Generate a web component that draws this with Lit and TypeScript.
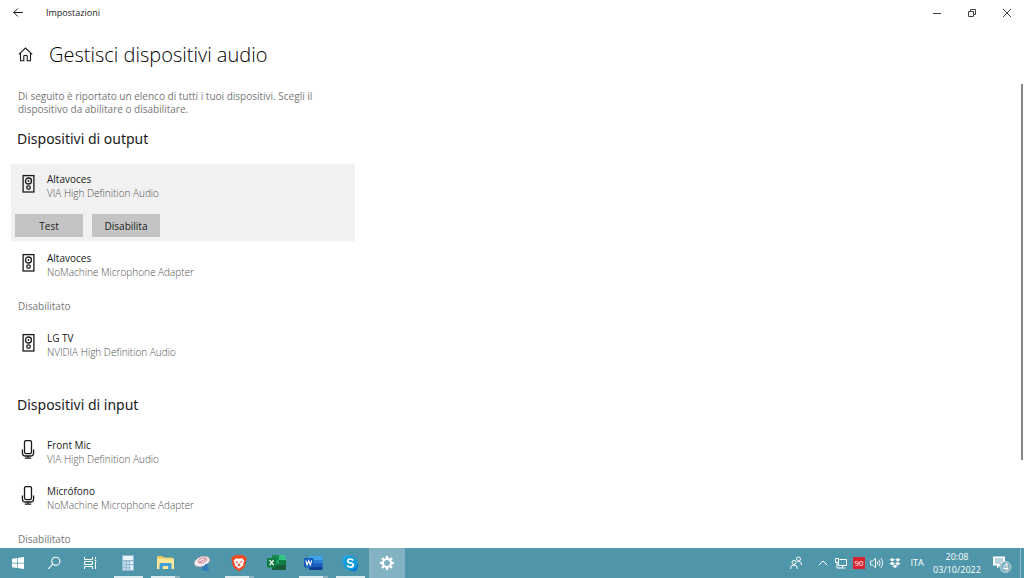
import { LitElement, html, css, svg, nothing } from "lit";
import { customElement, property } from "lit/decorators.js";
import { classMap } from "lit/directives/class-map.js";

const speaker = html`<svg class="glyph" width="20" height="20" viewBox="0 0 20 20" fill="none" stroke="#1a1a1a" aria-hidden="true">
  <rect x="4.1" y="1.6" width="10.8" height="16.4" stroke-width="1.3" />
  <circle cx="9.5" cy="7" r="3" stroke-width="1.3" />
  <circle cx="9.5" cy="7" r="0.9" fill="#1a1a1a" stroke="none" />
  <circle cx="9.5" cy="13.6" r="1.8" stroke-width="1.3" />
</svg>`;

const microphone = html`<svg class="glyph" width="20" height="20" viewBox="0 0 20 20" fill="none" stroke="#1a1a1a" stroke-width="1.3" aria-hidden="true">
  <rect x="5.5" y=".6" width="7" height="13" rx="1.6" />
  <path d="M3.400 9.500v3.200q0 3.300 3.200 3.300h4.800q3.200 0 3.200-3.300V9.500M9 16v2.300M5.800 18.200h6.400" />
</svg>`;

@customElement("device-item")
class DeviceItem extends LitElement {
  @property() name = "";
  @property() detail = "";
  @property() kind = "speaker";
  @property({ type: Boolean }) selected = false;

  static styles = css`
    :host { display: block; }
    .item { max-width: 344px; }
    .selected { background: #f1f1f1; margin-bottom: 2px; padding-bottom: 4px; }
    .row { display: flex; gap: 8px; padding: 8px 8px 10px; line-height: 14px; }
    .glyph { display: block; flex: none; margin-top: 2px; }
    .name { color: #1a1a1a; }
    .detail { color: #505050; font-weight: 300; }
    .actions { display: flex; gap: 9px; padding: 4px 4px 0; }
    .action { width: 68px; height: 23px; padding: 0; border: 0; background: #c4c4c4; color: #1a1a1a; font: inherit; }
  `;

  render() {
    return html`<div class=${classMap({ item: true, selected: this.selected })}>
      <div class="row">
        ${this.kind === "mic" ? microphone : speaker}
        <div>
          <div class="name">${this.name}</div>
          <div class="detail">${this.detail}</div>
        </div>
      </div>
      ${this.selected
        ? html`<div class="actions">
            <button class="action" type="button">Test</button>
            <button class="action" type="button">Disabilita</button>
          </div>`
        : nothing}
    </div>`;
  }
}

const start = svg`<g fill="#fff"><path d="M2 3.800l5-.7v4.600H2zM7.700 3l6.300-.9v5.600H7.700zM2 8.400h5V13l-5-.7zM7.700 8.400H14V14l-6.300-.9z"/></g>`;
const search = svg`<g fill="none" stroke="#fff" stroke-width="1.100"><circle cx="9.800" cy="6.300" r="4.100"/><path d="M6.900 9.200 2.300 13.800"/></g>`;
const taskView = svg`<g fill="none" stroke="#fff"><path d="M2.500 2v2.500h8V2M2.500 14v-2.500h8V14M2.500 6.500h8v3h-8zM13.500 2v2M13.500 7v7"/><path d="M12.700 5.500h1.600" stroke-width="1.600"/></g>`;
const calculator = svg`<rect x="2" y="0" width="12" height="16" fill="#8fb9d3"/><rect x="3" y="1" width="10" height="4" fill="#e8f5fb"/><g fill="#c5dceb"><path d="M3 6.500h2.600V9H3zM6.700 6.500h2.600V9H6.700zM3 10h2.600v2.200H3zM6.700 10h2.600v2.200H6.700zM3 13.200h2.600V15H3zM6.700 13.200h2.600V15H6.700z"/></g><path d="M10.300 6.500H13V9h-2.700z" fill="#f5fafc"/><path d="M10.300 10H13v5h-2.700z" fill="#e3f2fa"/>`;
const folder = svg`<path d="M0 1h5.500L7 2.500h9V14H0z" fill="#e9c85d"/><path d="M0 3.500h17V14H0z" fill="#fbe69a"/><path d="M2.500 14V9.200q0-1.200 1.200-1.200h9.600q1.200 0 1.200 1.200V14h-3.300v-3H5.800v3z" fill="#3f9fd5"/>`;
const snip = svg`<ellipse cx="8" cy="6.500" rx="8" ry="4.800" transform="rotate(-20 8 6.500)" fill="#f1edf0" stroke="#c9a9b0" stroke-width=".7"/><ellipse cx="8.500" cy="5.500" rx="4.500" ry="2.300" transform="rotate(-20 8.500 5.500)" fill="none" stroke="#ca7182" stroke-width=".8"/><path d="M5 7.500 12 4" stroke="#c45d6d" stroke-width=".8"/><g fill="none" stroke="#2878c0" stroke-width="1.300"><circle cx="9.600" cy="13.200" r="1.400"/><circle cx="12.800" cy="14" r="1.300"/><path d="M10.500 12 14.500 9M12.500 12.800l-1-3.800"/></g>`;
const brave = svg`<path d="M4 0h8l1.500 1.600 1.500.2.700 2.200-2 8L8 16.500 2.300 12l-2-8L1 1.800l1.500-.2z" fill="#ee4b24"/><path d="M5 3.200 8 3.800l3-.6 2.500 2.500-1.500 3.500.3 1.200L10 12l-2 1.800L6 12l-2.300-1.600.3-1.200-1.500-3.500z" fill="#fff"/><path d="M4 6l3 .8-.8 1.400zM12 6l-3 .8.8 1.400zM8 7.500l.7 2 1.300.8-2 1-2-1 1.300-.8z" fill="#ee4b24"/>`;
const excel = svg`<rect x="4" y="0" width="14" height="15" rx="1" fill="#21a366"/><path d="M4 0h7v5H4z" fill="#178a50"/><path d="M11 0h6q1 0 1 1v4h-7z" fill="#33c481"/><path d="M4 9.500h14V14q0 1-1 1H5q-1 0-1-1z" fill="#185c37"/><path d="M11 5h7v5h-7z" fill="#107c41"/><rect x="-1" y="3" width="9.500" height="9.500" rx="1" fill="#107c41"/><path d="m1.600 5.200 4 5M5.600 5.200l-4 5" stroke="#fff" stroke-width="1.300"/>`;
const word = svg`<rect x="4" y="1" width="13.500" height="14" rx="1" fill="#2b7cd3"/><path d="M4 2q0-1 1-1h11.500q1 0 1 1v3H4z" fill="#41a5ee"/><path d="M4 8.500h13.500V12H4z" fill="#185abd"/><path d="M4 12h13.500v2q0 1-1 1H5q-1 0-1-1z" fill="#103f91"/><rect x="-1" y="3" width="9.500" height="9.500" rx="1" fill="#185abd"/><path d="m.8 5.500 1.300 4.500 1.600-4.300L5.300 10l1.400-4.500" fill="none" stroke="#fff" stroke-width="1.100"/>`;
const skype = svg`<circle cx="6" cy="5.500" r="5.500" fill="#28a8ea"/><circle cx="11" cy="11" r="5.200" fill="#0078d4"/><circle cx="8.300" cy="8" r="7" fill="#109bdd"/><path d="M11.200 5.500Q10.400 4 8.300 4 5.700 4 5.700 5.900q0 1.500 2.700 2 2.900.6 2.900 2.200 0 2-2.900 2-2.500 0-3.200-1.800" fill="none" stroke="#fff" stroke-width="1.700"/>`;
const gear = svg`<circle cx="8" cy="8" r="4" fill="none" stroke="#fff" stroke-width="2"/><path d="M8 1v3M8 12v3M1 8h3M12 8h3M3.050 3.050l2.100 2.100M10.850 10.850l2.100 2.100M12.950 3.050l-2.100 2.100M5.150 10.850l-2.100 2.100" stroke="#fff" stroke-width="2.400"/>`;

const shell = [
  { label: "Start", art: start },
  { label: "Cerca", art: search },
  { label: "Visualizzazione attività", art: taskView },
];

const apps = [
  { label: "Calcolatrice", art: calculator, state: "open" },
  { label: "Esplora file", art: folder, state: "stacked" },
  { label: "Strumento di cattura", art: snip, state: "" },
  { label: "Brave", art: brave, state: "stacked" },
  { label: "Excel", art: excel, state: "" },
  { label: "Word", art: word, state: "stacked" },
  { label: "Skype", art: skype, state: "open" },
  { label: "Impostazioni", art: gear, state: "active" },
];

@customElement("task-bar")
class TaskBar extends LitElement {
  static styles = css`
    :host { display: flex; height: 30px; background: #5096aa; color: #fff; }
    button { padding: 0; border: 0; background: none; color: inherit; font: inherit; display: flex; align-items: center; justify-content: center; }
    svg { display: block; overflow: visible; }
    .group { display: flex; }
    .apps { gap: 1px; margin-left: 2px; flex: 1; }
    .task { width: 36px; position: relative; }
    .open::after, .stacked::after { content: ""; position: absolute; bottom: 0; left: 4px; right: 3px; height: 2px; background: #dcebef; }
    .stacked::after { background: linear-gradient(to right, #dcebef 24px, #8fb4c1 24px); }
    .active { background: #83b3c2; }
    .tray { display: flex; align-items: center; }
    .tray button { width: 18px; height: 30px; }
    .tray .people { margin-right: 9px; }
    .badge { background: #d8232f; width: 12px; height: 12px; line-height: 12px; font-size: 8px; text-align: center; }
    .tray .lang { width: 26px; font-size: 9px; }
    .tray .clock { width: 54px; flex-direction: column; font-size: 9px; line-height: 13px; }
    .tray .notes { width: 36px; }
    .count { font: 10px "Open Sans", sans-serif; }
    .tray .desktop { width: 4px; border-left: 1px solid #8dbac7; }
  `;

  render() {
    return html`
      <div class="group">
        ${shell.map((b) => html`<button class="task" type="button" aria-label=${b.label}>
          <svg width="16" height="16" viewBox="0 0 16 16">${b.art}</svg></button>`)}
      </div>
      <div class="group apps">
        ${apps.map((b) => html`<button
          class=${classMap({ task: true, open: b.state === "open", stacked: b.state === "stacked", active: b.state === "active" })}
          type="button" aria-label=${b.label}>
          <svg width="16" height="16" viewBox="0 0 16 16">${b.art}</svg></button>`)}
      </div>
      <div class="tray">
        <button class="people" type="button" aria-label="Contatti">
          <svg width="14" height="14" viewBox="0 0 14 14" fill="none" stroke="#fff"><circle cx="5" cy="6.500" r="2"/><path d="M1.500 13q0-4 3.500-4t3.500 4"/><circle cx="9.500" cy="3" r="2"/><path d="M8.500 5.700q4-1 4 3.300"/></svg>
        </button>
        <button type="button" aria-label="Mostra icone nascoste">
          <svg width="10" height="6" viewBox="0 0 10 6" fill="none" stroke="#fff"><path d="M.8 5.200 5 1l4.200 4.200"/></svg>
        </button>
        <button type="button" aria-label="Rete">
          <svg width="12" height="12" viewBox="0 0 12 12" fill="none" stroke="#fff"><path d="M4.500 2.500h7v6h-8V6M7.500 8.500v2M4.500 11h6M.5 1.500h3v4h-3zM2 5.500V11h3"/></svg>
        </button>
        <button type="button" aria-label="Temperatura"><span class="badge">90</span></button>
        <button type="button" aria-label="Volume">
          <svg width="14" height="12" viewBox="0 0 14 12" fill="none" stroke="#fff" stroke-width=".9"><path d="M.6 4h2L5.500 1.300v9.400L2.600 8h-2zM7.200 4.300q1.200 1.700 0 3.400M9 2.800q2.300 3.200 0 6.400M10.900 1.300q3.300 4.700 0 9.400"/></svg>
        </button>
        <button type="button" aria-label="Dropbox">
          <svg width="12" height="10" viewBox="0 0 12 10" fill="#fff"><path d="m3.200 0 2.700 1.800-2.700 1.800L.5 1.800zM8.800 0l2.700 1.800-2.700 1.800-2.700-1.800zM3.200 3.800l2.700 1.800-2.700 1.800L.5 5.600zM8.800 3.800l2.700 1.800-2.700 1.800-2.700-1.800zM6 6.500l2.500 1.700L6 10 3.500 8.200z"/></svg>
        </button>
        <button class="lang" type="button">ITA</button>
        <button class="clock" type="button"><span>20:08</span><span>03/10/2022</span></button>
        <button class="notes" type="button" aria-label="Notifiche">
          <svg width="18" height="18" viewBox="0 0 18 18"><path d="M0 2.500h12v9H7l-3 3v-3H0z" fill="#fff"/><path d="M2 5h8M2 7h8M2 9h6" stroke="#5096aa" stroke-width=".8"/><circle cx="12.500" cy="13" r="5.500" fill="#84b2c0" stroke="#c4dce3" stroke-width=".8"/><text class="count" x="12.500" y="17" text-anchor="middle" fill="#fff">4</text></svg>
        </button>
        <button class="desktop" type="button" aria-label="Mostra desktop"></button>
      </div>
    `;
  }
}

@customElement("app-root")
class AppRoot extends LitElement {
  static styles = css`
    :host { display: flex; flex-direction: column; height: 100vh; overflow: hidden; background: #fff; color: #1a1a1a; font: 10px/14px "Open Sans", "Noto Sans", sans-serif; }
    button { padding: 0; border: 0; background: none; color: inherit; display: flex; align-items: center; justify-content: center; }
    svg { display: block; }
    .titlebar { display: flex; height: 25px; align-items: center; font-size: 9px; }
    .back { width: 36px; height: 25px; }
    .title { flex: 1; padding-left: 10px; }
    .win { width: 35px; height: 25px; }
    .header { display: flex; align-items: center; gap: 16px; height: 59px; padding-left: 18px; }
    h1 { margin: 0; font-size: 20px; line-height: 28px; font-weight: 300; color: #000; }
    .scroller { flex: 1; min-height: 0; overflow: hidden; position: relative; }
    .thumb { position: absolute; top: 0; right: 1px; width: 2px; height: 81%; background: #858585; }
    .content { padding: 6px 11px 0; }
    p { margin: 0; padding-left: 7px; max-width: 310px; line-height: 13px; color: #777; }
    h2 { margin: 24px 0 13px; padding-left: 6px; font: 400 14px/24px "Noto Sans", sans-serif; }
    .intro + section h2 { margin-top: 11px; }
    h3 { margin: 10px 0; padding-left: 7px; font-size: 10px; line-height: 14px; font-weight: 400; color: #777; }
  `;

  render() {
    return html`
      <header class="titlebar">
        <button class="back" type="button" aria-label="Indietro">
          <svg width="10" height="10" viewBox="0 0 10 10" fill="none" stroke="#1a1a1a"><path d="M9.800 4.500H.8M4.800.5l-4 4 4 4"/></svg>
        </button>
        <span class="title">Impostazioni</span>
        <button class="win" type="button" aria-label="Riduci a icona">
          <svg width="8" height="8" viewBox="0 0 8 8" stroke="#444"><path d="M0 4.500h8"/></svg>
        </button>
        <button class="win" type="button" aria-label="Ripristina">
          <svg width="8" height="8" viewBox="0 0 8 8" fill="none" stroke="#444"><path d="M.5 2.500h5v5h-5zM2.500 2V.5h5v5H6"/></svg>
        </button>
        <button class="win" type="button" aria-label="Chiudi">
          <svg width="8" height="8" viewBox="0 0 8 8" stroke="#444"><path d="m0 0 8 8M8 0 0 8"/></svg>
        </button>
      </header>
      <div class="header">
        <svg width="15" height="15" viewBox="0 0 15 15" fill="none" stroke="#1a1a1a" stroke-width="1.100" role="img" aria-label="Home"><path d="M.8 7.300 7.500 1l6.700 6.300M2.500 6v7.800h3.300V9.200q0-.7.7-.7h2q.7 0 .7.700v4.600h3.300V6"/></svg>
        <h1>Gestisci dispositivi audio</h1>
      </div>
      <main class="scroller">
        <div class="content">
          <p class="intro">Di seguito è riportato un elenco di tutti i tuoi dispositivi. Scegli il dispositivo da abilitare o disabilitare.</p>
          <section>
            <h2>Dispositivi di output</h2>
            <device-item selected name="Altavoces" detail="VIA High Definition Audio"></device-item>
            <device-item name="Altavoces" detail="NoMachine Microphone Adapter"></device-item>
            <h3>Disabilitato</h3>
            <device-item name="LG TV" detail="NVIDIA High Definition Audio"></device-item>
          </section>
          <section>
            <h2>Dispositivi di input</h2>
            <device-item kind="mic" name="Front Mic" detail="VIA High Definition Audio"></device-item>
            <device-item kind="mic" name="Micrófono" detail="NoMachine Microphone Adapter"></device-item>
            <h3>Disabilitato</h3>
          </section>
        </div>
        <div class="thumb"></div>
      </main>
      <task-bar></task-bar>
    `;
  }
}
